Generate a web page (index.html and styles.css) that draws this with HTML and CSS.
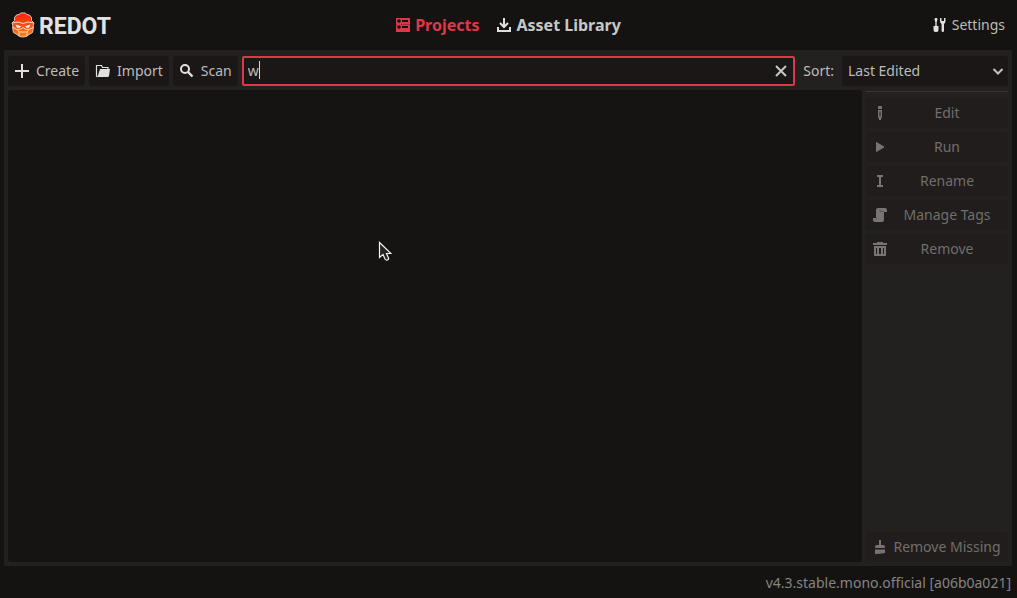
FILE: index.html
```html
<!DOCTYPE html>
<html lang="en">
<head>
<meta charset="utf-8">
<title>Redot - Project Manager</title>
<link rel="stylesheet" href="styles.css">
</head>
<body>
<header class="titlebar">
  <div class="brand">
    <svg class="brand-logo" width="24" height="26" viewBox="0 0 24 26" aria-hidden="true">
      <defs><linearGradient id="flame" x1="0" y1="0" x2="0" y2="1"><stop offset="0" stop-color="#ff2008"/><stop offset="0.500" stop-color="#ff4a10"/><stop offset="1" stop-color="#ff8410"/></linearGradient></defs>
      <path d="M8.500 2.500l1-1.500h5l1 1.500 3 .5 2 2.500v3L23 11l-1 3 .5 1-1 5.500-3.500 2-2.500 2L12 25l-3.500-.5-2.500-2-3.500-2L1.500 15l.5-1-1-3 2.500-2.500v-3l2-2.500z" fill="url(#flame)" stroke="#e2c4bc" stroke-width="1"/>
      <path d="M1.500 11L7 10l5 1.500L17 10l5.500 1M2 15.500L6 17.500l4-.5 2-1.500 2 1.500 4 .5 4-2M6.500 18l1.500 2v4M17.500 18L16 20v4M8 20h8" fill="none" stroke="#f3dccf" stroke-width="1"/>
      <path d="M4.500 12.500l5.500 1.800-1.500 1.400H6zM19.500 12.500L14 14.300l1.500 1.400H18z" fill="#fff4ec"/>
    </svg>
    <span class="brand-name">REDOT</span>
  </div>
  <nav class="tabs">
    <button class="tab tab-active" type="button">
      <svg width="16" height="16" viewBox="0 0 16 16" aria-hidden="true"><path d="M1 1h14v14H1z" fill="#e0364a"/><path d="M7 3h6v2H7zM7 9h6v2H7z" fill="#141311"/><path d="M1 7h1v1H1zM6 7h9v1H6z" fill="#a22b38"/><circle cx="4" cy="4" r="1.800" fill="#141311"/><circle cx="4" cy="10" r="1.800" fill="#141311"/></svg>
      <span>Projects</span>
    </button>
    <button class="tab" type="button">
      <svg width="16" height="16" viewBox="0 0 16 16" aria-hidden="true"><path d="M8 1v8.500M4 6l4 4 4-4M2 10v4h12v-4" fill="none" stroke="#e0e0e0" stroke-width="2"/></svg>
      <span>Asset Library</span>
    </button>
  </nav>
  <button class="settings" type="button">
    <svg width="16" height="16" viewBox="0 0 16 16" aria-hidden="true" fill="#e0e0e0"><path d="M3 1h2l.5 1.500L4.700 5v4H6.500v4q0 2-2 2h-1q-2 0-2-2V9h1.800V5L2.500 2.500z"/><path d="M8 1h1.500v3h2.500V1h1.500v3q0 2-1.500 3v7q0 1-1.200 1T9.600 14V7Q8 6 8 4z"/></svg>
    <span>Settings</span>
  </button>
</header>
<main class="manager">
  <div class="toolbar">
    <button class="button" type="button">
      <svg width="16" height="16" viewBox="0 0 16 16" aria-hidden="true"><path d="M7 1h2v6h6v2H9v6H7V9H1V7h6z" fill="#e0e0e0"/></svg>
      <span>Create</span>
    </button>
    <button class="button" type="button">
      <svg width="16" height="16" viewBox="0 0 16 16" aria-hidden="true"><path d="M2.500 14L1.500 13V2.500h5l1 2H13V6" fill="none" stroke="#e0e0e0" stroke-width="1.200"/><path d="M5 6h10l-1 7-1 1H2.500z" fill="#e0e0e0"/></svg>
      <span>Import</span>
    </button>
    <button class="button" type="button">
      <svg width="16" height="16" viewBox="0 0 16 16" aria-hidden="true"><circle cx="6" cy="6" r="4" fill="none" stroke="#e0e0e0" stroke-width="2"/><path d="M9 9l4.500 4.500" stroke="#e0e0e0" stroke-width="2.400"/></svg>
      <span>Scan</span>
    </button>
    <div class="filter">
      <input class="filter-input" type="text" value="w" aria-label="Filter projects">
      <span class="caret"></span>
      <button class="filter-clear" type="button" aria-label="Clear">
        <svg width="16" height="16" viewBox="0 0 16 16" aria-hidden="true"><path d="M3 3l10 10M13 3L3 13" stroke="#c8c8c8" stroke-width="2"/></svg>
      </button>
    </div>
    <label class="sort-label" for="sort">Sort:</label>
    <div class="sort">
      <select class="sort-select" id="sort"><option>Last Edited</option><option>Name</option><option>Path</option><option>Tags</option></select>
      <svg class="sort-arrow" width="16" height="16" viewBox="0 0 16 16" aria-hidden="true"><path d="M3.500 6L8 10.500 12.500 6" fill="none" stroke="#c2c2c2" stroke-width="2"/></svg>
    </div>
  </div>
  <div class="content">
    <section class="projects" aria-label="Projects"></section>
    <aside class="actions">
      <button class="action" type="button" disabled>
        <svg width="16" height="16" viewBox="0 0 16 16" aria-hidden="true"><path fill-rule="evenodd" d="M7 1h2q1 0 1 1v2H6V2q0-1 1-1zM6 5h4v7l-1 2v1H7v-1l-1-2zM7.500 6.500v5h1v-5z" fill="#777473"/></svg>
        <span class="action-text">Edit</span>
      </button>
      <button class="action" type="button" disabled>
        <svg width="16" height="16" viewBox="0 0 16 16" aria-hidden="true"><path d="M4.500 3.500L12 8l-7.500 4.500z" fill="#777473" stroke="#777473" stroke-linejoin="round"/></svg>
        <span class="action-text">Run</span>
      </button>
      <button class="action" type="button" disabled>
        <svg width="16" height="16" viewBox="0 0 16 16" aria-hidden="true"><path d="M5 2h6v2H9v8h2v2H5v-2h2V4H5z" fill="#777473"/></svg>
        <span class="action-text">Rename</span>
      </button>
      <button class="action" type="button" disabled>
        <svg width="16" height="16" viewBox="0 0 16 16" aria-hidden="true"><path d="M6 1h7q2 0 2 2v2h-3v8q0 2-2 2H3q-2 0-2-2v-2h3V3q0-2 2-2z" fill="#777473"/><path d="M8 2.500V4.500h4M4.500 11v2" fill="none" stroke="#5a5756"/></svg>
        <span class="action-text">Manage Tags</span>
      </button>
      <button class="action" type="button" disabled>
        <svg width="16" height="16" viewBox="0 0 16 16" aria-hidden="true"><path fill-rule="evenodd" d="M5 1h6v1h4v2H1V2h4zM2 5h12v9q0 1-1 1H3q-1 0-1-1zM4 7v6h1V7zM7 7v6h2V7zM11 7v6h1V7z" fill="#777473"/></svg>
        <span class="action-text">Remove</span>
      </button>
      <button class="action action-last" type="button" disabled>
        <svg width="16" height="16" viewBox="0 0 16 16" aria-hidden="true"><path d="M7 1h2v5h2q2 0 2 2v1H3V8q0-2 2-2h2zM3 10.500h10v3.500q-5 1-10 1z" fill="#777473"/></svg>
        <span class="action-text">Remove Missing</span>
      </button>
    </aside>
  </div>
</main>
<footer class="status"><button class="version" type="button">v4.3.stable.mono.official [a06b0a021]</button></footer>
<svg class="pointer" width="14" height="21" viewBox="0 0 14 21" aria-hidden="true"><path d="M1.500 1.500v15l3.500-3 2 4.500q1 1.500 2.500 1t1-2L8.500 12.500H13z" fill="#242424" stroke="#f4f4f4" stroke-width="1.200"/></svg>
</body>
</html>
```
FILE: styles.css
```css
* { box-sizing: border-box; }
body {
  margin: 0;
  min-height: 100vh;
  display: flex;
  flex-direction: column;
  background: #141311;
  color: #bdbcbb;
  font: 14px/20px "Noto Sans", sans-serif;
}
button, input, select {
  margin: 0;
  border: 0;
  padding: 0;
  background: none;
  color: inherit;
  font: inherit;
}
svg { flex: none; display: block; }

.titlebar {
  display: grid;
  grid-template-columns: 1fr auto 1fr;
  align-items: center;
  height: 50px;
  padding: 0 12px 0 11px;
}
.brand { display: flex; align-items: center; gap: 4px; }
.brand-name {
  padding-top: 4px;
  color: #e2e2e2;
  font: bold 23px/28px Roboto, sans-serif;
}
.tabs { display: flex; gap: 17px; }
.tab {
  display: flex;
  align-items: center;
  gap: 4px;
  color: #c9c8c8;
  font-size: 16px;
  font-weight: bold;
}
.tab-active { color: #e0364a; }
.settings {
  display: flex;
  align-items: center;
  justify-self: end;
  gap: 4px;
}

.manager {
  flex: 1;
  display: flex;
  flex-direction: column;
  gap: 4px;
  margin: 0 5px 0 4px;
  padding: 6px 4px 4px;
  background: #232020;
}
.toolbar { display: flex; align-items: center; gap: 4px; }
.button {
  display: flex;
  align-items: center;
  gap: 6px;
  height: 30px;
  padding: 0 6px;
  border-radius: 3px;
  background: #1a1716;
}
.filter {
  position: relative;
  flex: 1;
  display: flex;
  align-items: center;
  height: 30px;
  padding: 0 4px;
  border: 2px solid #e0364a;
  border-radius: 2px;
  background: #1a1716;
}
.filter-input { flex: 1; min-width: 0; outline: 0; }
.filter-clear { padding: 0; }
.caret {
  position: absolute;
  left: 15px;
  top: 3px;
  width: 1px;
  height: 18px;
  background: #d8d8d8;
}
.sort-label { padding: 0 4px; }
.sort {
  position: relative;
  width: 166px;
  height: 30px;
  border-radius: 3px;
  background: #1a1716;
}
.sort-select {
  width: 100%;
  height: 100%;
  padding: 0 24px 0 6px;
  appearance: none;
}
.sort-arrow {
  position: absolute;
  right: 2px;
  top: 7px;
  pointer-events: none;
}

.content { flex: 1; display: flex; gap: 4px; }
.projects { flex: 1; border-radius: 3px; background: #161412; }
.actions {
  display: flex;
  flex-direction: column;
  gap: 4px;
  width: 142px;
}
.actions::before {
  content: "";
  height: 1px;
  margin: 1px 0 2px;
  background: #3a3535;
}
.action {
  display: flex;
  align-items: center;
  gap: 4px;
  height: 30px;
  padding: 0 6px;
  border-radius: 3px;
  background: #201d1c;
  color: #716e6d;
}
.action-text { flex: 1; text-align: center; white-space: nowrap; }
.action-last { margin-top: auto; }

.status {
  display: flex;
  align-items: center;
  justify-content: flex-end;
  height: 32px;
  padding: 2px 6px 0;
}
.version { color: #868483; }
.pointer { position: absolute; left: 378px; top: 241px; }
```
